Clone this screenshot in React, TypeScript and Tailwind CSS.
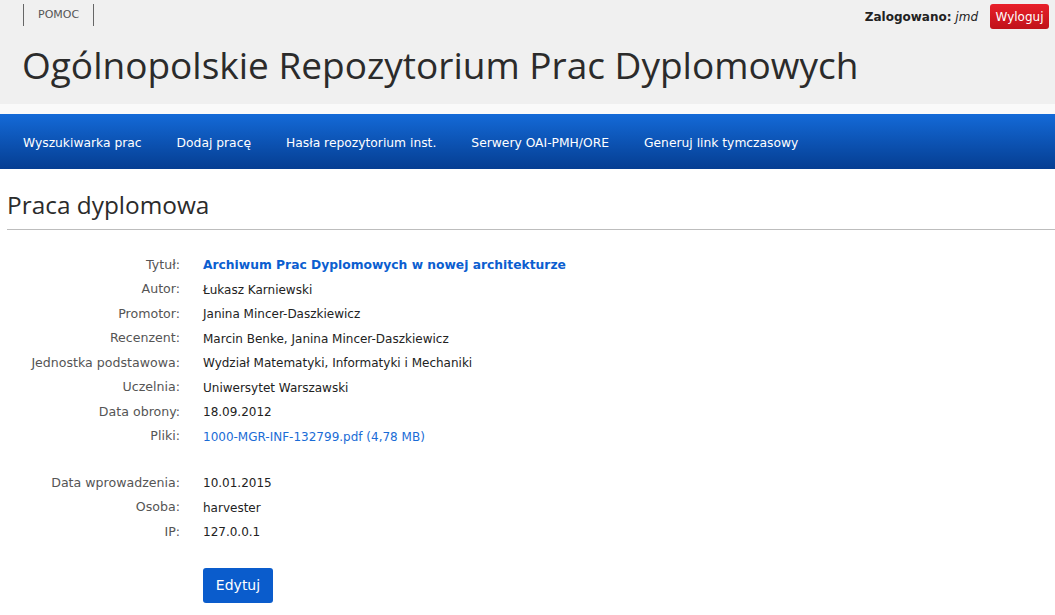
import React from "react";

const rows: { label: string; value: string; kind?: "title" | "link" }[] = [
  { label: "Tytuł:", value: "Archiwum Prac Dyplomowych w nowej architekturze", kind: "title" },
  { label: "Autor:", value: "Łukasz Karniewski" },
  { label: "Promotor:", value: "Janina Mincer-Daszkiewicz" },
  { label: "Recenzent:", value: "Marcin Benke, Janina Mincer-Daszkiewicz" },
  { label: "Jednostka podstawowa:", value: "Wydział Matematyki, Informatyki i Mechaniki" },
  { label: "Uczelnia:", value: "Uniwersytet Warszawski" },
  { label: "Data obrony:", value: "18.09.2012" },
  { label: "Pliki:", value: "1000-MGR-INF-132799.pdf (4,78 MB)", kind: "link" },
];

const meta = [
  { label: "Data wprowadzenia:", value: "10.01.2015" },
  { label: "Osoba:", value: "harvester" },
  { label: "IP:", value: "127.0.0.1" },
];

const menu = [
  "Wyszukiwarka prac",
  "Dodaj pracę",
  "Hasła repozytorium inst.",
  "Serwery OAI-PMH/ORE",
  "Generuj link tymczasowy",
];

function Row({ label, value, kind }: { label: string; value: string; kind?: string }) {
  return (
    <div className="flex h-[24.5px] items-center">
      <div className="w-[180px] shrink-0 text-right text-[12.6px] text-[#555]">{label}</div>
      <div
        className={
          "pl-[23px] " +
          (kind === "title"
            ? "text-[12.3px] font-bold text-[#0b5ed0]"
            : kind === "link"
            ? "text-[#1a6cd6]"
            : "text-[#222]")
        }
      >
        {value}
      </div>
    </div>
  );
}

export default function App() {
  return (
    <div className="min-h-[615px] bg-white font-['DejaVu_Sans',sans-serif] text-[12px]">
      <header className="h-[104px] bg-[#f0f0f0]">
        <div className="flex items-start justify-between pl-[23px] pr-[6px] pt-[4px]">
          <a className="flex h-[22px] items-center border-x border-[#666] px-[14px] text-[11px] uppercase text-[#555]">
            Pomoc
          </a>
          <div className="flex items-center gap-[12px]">
            <span className="text-[#222]">
              <b>Zalogowano:</b> <i>jmd</i>
            </span>
            <button className="h-[25px] w-[59px] rounded-[3px] bg-gradient-to-b from-[#e8202a] to-[#c0121a] text-[12px] text-white">
              Wyloguj
            </button>
          </div>
        </div>
        <h1 className="mt-[11px] pl-[22px] font-['Open_Sans',sans-serif] text-[37px] leading-[50px] text-[#2b2b2b]">
          Ogólnopolskie Repozytorium Prac Dyplomowych
        </h1>
      </header>
      <div className="h-[10px] bg-[#fafafa]" />
      <nav className="flex h-[55px] items-center bg-gradient-to-b from-[#146ad8] to-[#063e92] pl-[23px] pt-[3px]">
        {menu.map((m) => (
          <span key={m} className="mr-[35px] text-[12.3px] text-white">
            {m}
          </span>
        ))}
      </nav>
      <main className="pl-[7px]">
        <h2 className="border-b border-[#bdbdbd] pb-[8px] pt-[20px] font-['Open_Sans',sans-serif] text-[24.4px] leading-[32px] text-[#2b2b2b]">
          Praca dyplomowa
        </h2>
        <div className="-ml-[7px] pt-[23px]">
          {rows.map((r) => (
            <Row key={r.label} {...r} />
          ))}
          <div className="h-[22px]" />
          {meta.map((r) => (
            <Row key={r.label} {...r} />
          ))}
          <div className="pl-[203px] pt-[23px]">
            <button className="h-[35px] w-[70px] rounded-[3px] bg-[#0a5ccc] text-[14px] text-white">
              Edytuj
            </button>
          </div>
        </div>
      </main>
    </div>
  );
}
